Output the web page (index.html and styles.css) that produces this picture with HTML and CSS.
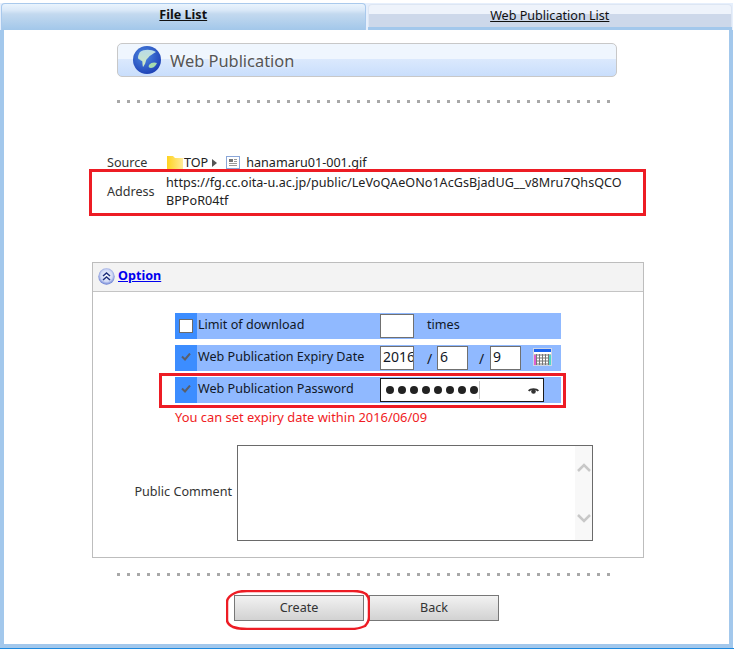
FILE: index.html
```html
<!DOCTYPE html>
<html lang="en">
<head>
<meta charset="utf-8">
<title>Web Publication</title>
<link rel="stylesheet" href="styles.css">
</head>
<body>
<div class="page">
  <nav class="tabs">
    <a class="tab tab-active" href="#">File List</a>
    <a class="tab tab-idle" href="#">Web Publication List</a>
  </nav>
  <main class="panel">
    <div class="title-bar">
      <svg class="globe" width="28" height="28" viewBox="0 0 28 28">
        <defs>
          <radialGradient id="sea" cx="40%" cy="35%" r="70%"><stop offset="0" stop-color="#4f8ae2"/><stop offset="1" stop-color="#1c3fb4"/></radialGradient>
          <linearGradient id="land" x1="0" y1="0" x2="0" y2="1"><stop offset="0" stop-color="#b9dce8"/><stop offset="1" stop-color="#cfeac0"/></linearGradient>
        </defs>
        <circle cx="14" cy="14" r="14" fill="url(#sea)"/>
        <path d="M7 6C11 3 18 3 23 6c-3 2-6 3-8 6-2 1-2 3-3 6-1 1-1 2-2 3-1-4 0-7-2-6-1-3-2 0-3-3 0-3 1-4 2-6z" fill="url(#land)"/>
        <path d="M16 19c2-3 6-3 8-2-1 2-3 5-6 5-2 0-3-1-2-3z" fill="#a6dcae"/>
      </svg>
      <span class="title-text">Web Publication</span>
    </div>
    <div class="dots dots-top"></div>

    <div class="info-row source-row">
      <span class="info-label">Source</span>
      <span class="path">
        <svg class="folder" width="16" height="13" viewBox="0 0 16 13"><defs><linearGradient id="fold" x1="0" y1="0" x2="1" y2="0"><stop offset="0" stop-color="#ffd21f"/><stop offset="1" stop-color="#ffeb9a"/></linearGradient></defs><path d="M0 0h6l2 2h8v11H0z" fill="url(#fold)"/></svg>
        <span class="top-label">TOP</span>
        <svg class="crumb" width="5" height="8" viewBox="0 0 5 8"><path d="M0 0l5 4-5 4z" fill="#555"/></svg>
        <svg class="doc" width="14" height="13" viewBox="0 0 14 13"><rect x=".5" y=".5" width="13" height="12" fill="#fff" stroke="#8aa6d8"/><rect x="3" y="3" width="4" height="3" fill="#777"/><path d="M8 3.500h3M8 5.500h3M3 7.500h8M3 9.500h8" stroke="#999"/></svg>
        <span class="filename">hanamaru01-001.gif</span>
      </span>
    </div>
    <div class="info-row address-row">
      <span class="info-label">Address</span>
      <span class="url">https://fg.cc.oita-u.ac.jp/public/LeVoQAeONo1AcGsBjadUG__v8Mru7QhsQCO<br>BPPoR04tf</span>
    </div>

    <section class="option-box">
      <header class="option-head">
        <svg class="collapse" width="17" height="17" viewBox="0 0 17 17">
          <defs><radialGradient id="ball" cx="50%" cy="45%" r="60%"><stop offset="0" stop-color="#fff"/><stop offset=".6" stop-color="#cfd8f5"/><stop offset="1" stop-color="#4a63c8"/></radialGradient></defs>
          <circle cx="8.500" cy="8.500" r="8.200" fill="url(#ball)"/>
          <path d="M5 8l3.500-3L12 8M5 12l3.500-3L12 12" fill="none" stroke="#1e2f7c" stroke-width="1.500"/>
        </svg>
        <a class="option-link" href="#">Option</a>
      </header>
      <div class="opt-rows">
        <div class="opt-row">
          <span class="opt-check"><span class="box"></span></span>
          <span class="opt-label">Limit of download</span>
          <span class="field f-short"></span>
          <span class="times">times</span>
        </div>
        <div class="opt-row">
          <span class="opt-check"><svg class="tick" width="10" height="8" viewBox="0 0 10 8"><path d="M1 3.500l3 3 5-6" fill="none" stroke="#5a5f6a" stroke-width="2"/></svg></span>
          <span class="opt-label">Web Publication Expiry Date</span>
          <span class="field f-short clip">2016</span>
          <span class="slash">/</span>
          <span class="field f-date">6</span>
          <span class="slash slash-b">/</span>
          <span class="field f-date">9</span>
          <svg class="cal" width="19" height="18" viewBox="0 0 19 18">
            <rect width="19" height="18" fill="#cfd6e4"/>
            <rect x="1" y="1" width="17" height="3" fill="#1a63f0"/>
            <rect x="1" y="4" width="17" height="13" fill="#fff"/>
            <path d="M1 7h17M1 10h17M1 13h17M1 16h17M3.500 6v11M6.500 6v11M9.500 6v11M12.500 6v11M15.500 6v11" stroke="#777" stroke-width="1"/>
            <rect x="1" y="7" width="2" height="10" fill="#e060d0"/>
            <rect x="16" y="7" width="2" height="10" fill="#50d8c8"/>
          </svg>
        </div>
        <div class="opt-row">
          <span class="opt-check"><svg class="tick" width="10" height="8" viewBox="0 0 10 8"><path d="M1 3.500l3 3 5-6" fill="none" stroke="#5a5f6a" stroke-width="2"/></svg></span>
          <span class="opt-label">Web Publication Password</span>
          <span class="pw">
            <i></i><i></i><i></i><i></i><i></i><i></i><i></i><i></i>
            <span class="caret"></span>
            <svg class="eye" width="11" height="7" viewBox="0 0 11 7"><path d="M0 3.500C2 .5 9 .5 11 3.500L9.500 4.500C8 2.500 3 2.500 1.500 4.500z" fill="#333"/><circle cx="5.500" cy="4.500" r="2.300" fill="#333"/></svg>
          </span>
        </div>
      </div>
      <p class="notice">You can set expiry date within 2016/06/09</p>
      <div class="comment-row">
        <span class="comment-label">Public Comment</span>
        <div class="comment-box">
          <div class="scroll">
            <svg width="14" height="9" viewBox="0 0 14 9"><path d="M1 8l6-6 6 6" fill="none" stroke="#c8c8c8" stroke-width="2.500"/></svg>
            <svg width="14" height="9" viewBox="0 0 14 9"><path d="M1 1l6 6 6-6" fill="none" stroke="#c8c8c8" stroke-width="2.500"/></svg>
          </div>
        </div>
      </div>
    </section>

    <div class="dots dots-bottom"></div>
    <div class="actions">
      <button class="btn" type="button">Create</button>
      <button class="btn" type="button">Back</button>
    </div>
  </main>
  <span class="mark mark-address"></span>
  <span class="mark mark-password"></span>
  <svg class="oval" width="144" height="40" viewBox="0 0 144 40"><path d="M9 3C13 1 17 1 21 1H127C133 1 137 2 140 4C142 6 143 8 143 11V27C143 31 141 34 139 36C135 38 130 39 124 39H21C15 39 10 38 7 37C3 35 1 33 1 30V12C1 8 5 5 9 3Z" fill="none" stroke="#ed1c24" stroke-width="2.500"/></svg>
</div>
</body>
</html>
```
FILE: styles.css
```css
* { box-sizing: border-box; }
html, body { margin: 0; padding: 0; }
body {
  background: #fff;
  font-family: "Noto Sans", "Open Sans", sans-serif;
  font-size: 12.6px;
  color: #222;
}
.page {
  position: relative;
  width: 734px;
  height: 649px;
  padding-right: 1px;
  overflow: hidden;
  border-bottom: 1px solid #1f8ae0;
}
.tabs {
  display: flex;
  height: 30px;
  padding-top: 3px;
  background: linear-gradient(#fff 0 3px, #e6effc 3px);
}
.tab {
  flex: 1;
  text-align: center;
  color: #111;
  border-radius: 4px 4px 0 0;
}
.tab-active {
  margin-left: 1px;
  margin-right: 2px;
  font-weight: 700;
  line-height: 21px;
  border: 1px solid #a9c9ec;
  border-bottom: 0;
  background: linear-gradient(#eaf4fd 0, #dbe9f8 6px, #c3d9ef 10px, #a2c7ea 100%);
}
.tab-idle {
  margin-top: 1px;
  height: 23px;
  line-height: 21px;
  margin-right: 1px;
  border: 1px solid #dde6f3;
  border-bottom: 0;
  background: linear-gradient(#eef3fb 0 9px, #cdd8ea 9px);
  box-shadow: 0 3px 0 #a3c8ec;
}
.panel {
  height: 618px;
  border: 4px solid #a3c8ec;
  border-top: 0;
  background: #fff;
  overflow: hidden;
}
.title-bar {
  display: flex;
  align-items: center;
  width: 500px;
  height: 34px;
  margin: 13px 0 0 113px;
  padding-left: 15px;
  border: 1px solid #c8c8c8;
  border-radius: 5px;
  background: linear-gradient(#eff6fe 0 15px, #dbe9fd 15px, #c9defc 100%);
}
.title-text {
  margin-left: 9px;
  font-size: 16.4px;
  color: #555;
  text-shadow: 0 0 3px #fff;
}
.dots {
  width: 494px;
  height: 3px;
  margin-left: 113px;
  background: radial-gradient(circle at 1.500px 1.500px, #a8a8a8 1.500px, transparent 1.600px) 0 0 / 10px 3px repeat-x;
}
.dots-top { margin-top: 23px; }
.dots-bottom { margin-top: 15px; }
.info-row {
  display: flex;
  align-items: center;
  padding-left: 103px;
  line-height: 18px;
}
.source-row { margin-top: 51px; height: 18px; }
.address-row { margin-top: 2px; height: 36px; }
.info-label { width: 59px; color: #333; }
.url { color: #222; letter-spacing: .03px; }
.path { display: flex; align-items: center; margin-left: 1px; }
.folder { margin-top: -2px; }
.top-label { margin-left: 1px; }
.crumb { margin: 0 9px 0 4px; }
.doc { margin-top: -2px; }
.filename { margin-left: 6px; }
.option-box {
  width: 552px;
  height: 296px;
  margin: 52px 0 0 88px;
  border: 1px solid #bdbdbd;
}
.option-head {
  display: flex;
  align-items: center;
  height: 29px;
  padding-left: 5px;
  gap: 3px;
  background: #f3f3f3;
  border-bottom: 1px solid #c4c4c4;
}
.option-link { margin-bottom: 3px; font-weight: 700; color: #0000ee; }
.collapse { margin-bottom: 1px; }
.opt-rows {
  display: flex;
  flex-direction: column;
  gap: 6px;
  width: 386px;
  margin: 21px 0 0 82px;
}
.opt-row {
  display: flex;
  align-items: center;
  height: 26px;
  background: #90b9ff;
  color: #111827;
}
.opt-check {
  display: flex;
  align-items: center;
  justify-content: center;
  width: 22px;
  height: 100%;
  background: #3c8dff;
}
.box {
  width: 14px;
  height: 14px;
  background: #fff;
  border: 1px solid #6a6a6a;
}
.tick { margin-top: -2px; }
.opt-label { width: 183px; padding-left: 1px; margin-top: -3px; }
.field {
  height: 24px;
  background: #fff;
  border: 1px solid #707070;
  line-height: 20px;
  padding-left: 2px;
  font-size: 14px;
}
.f-short { width: 34px; }
.f-date { width: 31px; }
.clip { overflow: hidden; white-space: nowrap; }
.times { margin: -3px 0 0 13px; }
.slash { width: 23px; padding-left: 13px; font-size: 14px; }
.slash-b { width: 22px; padding-left: 11px; }
.cal { margin-left: 12px; margin-top: -3px; }
.pw {
  position: relative;
  display: flex;
  align-items: center;
  gap: 4px;
  width: 164px;
  height: 24px;
  padding-left: 5px;
  background: #fff;
  border: 1px solid #1a1a1a;
}
.pw i {
  width: 8px;
  height: 8px;
  border-radius: 50%;
  background: #222;
}
.caret {
  position: absolute;
  left: 98px;
  top: 2px;
  bottom: 2px;
  width: 1px;
  background: #c8c8c8;
}
.eye { position: absolute; right: 4px; top: 8px; }
.notice {
  margin: 6px 0 0 82px;
  font-size: 12.9px;
  line-height: 17px;
  color: #f01c24;
}
.comment-row {
  display: flex;
  align-items: center;
  margin-top: 19px;
}
.comment-label {
  width: 139px;
  margin-top: -4px;
  text-align: right;
  color: #333;
}
.comment-box {
  width: 356px;
  height: 96px;
  margin-left: 5px;
  display: flex;
  justify-content: flex-end;
  background: #fff;
  border: 1px solid #6a6a6a;
}
.scroll {
  display: flex;
  flex-direction: column;
  align-items: center;
  justify-content: space-between;
  width: 17px;
  padding: 17px 0;
  background: #f8f8f8;
}
.actions {
  display: flex;
  gap: 5px;
  margin: 19px 0 0 230px;
}
.btn {
  width: 130px;
  height: 26px;
  padding: 0 0 2px;
  font: inherit;
  color: #333;
  border: 1px solid #777;
  background: linear-gradient(#f2f2f2, #d2d2d2);
}
.mark {
  position: absolute;
  border: 3px solid #ed1c24;
  pointer-events: none;
}
.mark-address { left: 89px; top: 169px; width: 557px; height: 47px; }
.mark-password { left: 159px; top: 373px; width: 407px; height: 35px; }
.oval { position: absolute; left: 226px; top: 590px; pointer-events: none; }
```
